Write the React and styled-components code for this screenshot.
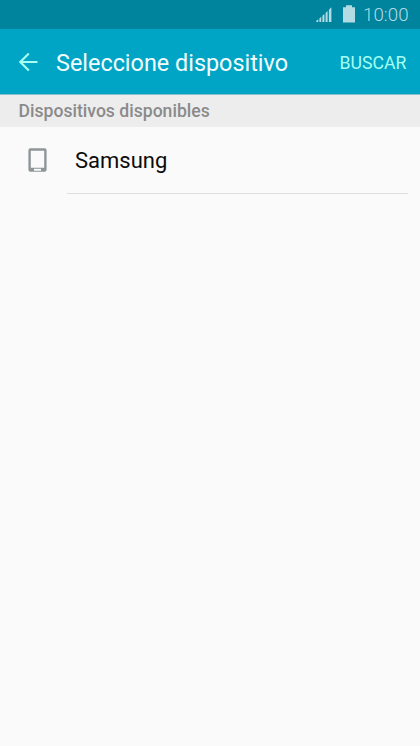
import React from 'react'
import styled, { createGlobalStyle } from 'styled-components'

const devices = [{ id: 1, name: 'Samsung' }]

const App = () => {
	return (
		<>
			<GlobalStyle />
			<Screen>
				<StatusBar>
					<SignalIcon />
					<BatteryIcon />
					<Clock>10:00</Clock>
				</StatusBar>
				<AppBar>
					<BackButton aria-label='Atrás'>
						<BackIcon />
					</BackButton>
					<Title>Seleccione dispositivo</Title>
					<SearchButton>BUSCAR</SearchButton>
				</AppBar>
				<SectionTitle>Dispositivos disponibles</SectionTitle>
				<DeviceList>
					{devices.map(device => (
						<Device key={device.id}>
							<DeviceIcon />
							<DeviceName>{device.name}</DeviceName>
						</Device>
					))}
				</DeviceList>
			</Screen>
		</>
	)
}

const SignalIcon = () => (
	<svg width='16' height='16' viewBox='0 0 16 16' fill='#b3dbe4'>
		<path d='M0.3 15v-1.2l2-1.6V15zM3.4 15v-3.6l1.8-1.6V15zM6.4 15V8.8l2-1.8V15zM9.6 15V6l2-2V15zM12.9 15V2.8l2.5-2.5V15z' />
	</svg>
)

const BatteryIcon = () => (
	<svg width='12' height='18' viewBox='0 0 12 18' fill='#b3dbe4'>
		<path d='M3 0.3h6v2h3V17.6H0V2.3h3z' />
	</svg>
)

const BackIcon = () => (
	<svg width='20' height='20' viewBox='0 0 20 20' fill='none' stroke='#a5fff2' strokeWidth='2.2'>
		<path d='M19.5 10H2.3M10.8 1.4L2.3 10l8.5 8.6' />
	</svg>
)

const DeviceIcon = () => (
	<svg width='20' height='24' viewBox='0 0 20 24'>
		<path
			fill='#8f9699'
			fillRule='evenodd'
			d='M2.4 0.2h14.2A2 2 0 0 1 18.6 2.2v19.5a2 2 0 0 1-2 2h-14.2a2 2 0 0 1-2-2V2.2a2 2 0 0 1 2-2zM2.8 2.8v17h13.4v-17zM6 20.8v1.9h7v-1.9z'
		/>
	</svg>
)

const GlobalStyle = createGlobalStyle`
	* {
		box-sizing: border-box;
	}

	body {
		margin: 0;
		background-color: #fafafa;
		font-family: Roboto, sans-serif;
	}
`

const Screen = styled.div`
	display: flex;
	flex-direction: column;
	width: 100%;
	min-height: 100vh;
	background-color: #fafafa;
`

const StatusBar = styled.div`
	display: flex;
	align-items: center;
	justify-content: flex-end;
	height: 29px;
	padding-right: 11.5px;
	background-color: #00839d;

	& svg:nth-child(2) {
		margin: 0 8px 1px 11px;
	}
`

const Clock = styled.span`
	margin-top: 2px;
	color: #b3dbe4;
	font-size: 18.7px;
	font-weight: 300;
	line-height: 29px;
`

const AppBar = styled.header`
	display: flex;
	align-items: center;
	height: 66px;
	padding: 0 13.5px 0 18px;
	background-color: #00a5c5;
	border-bottom: 1px solid #85c0cd;
`

const BackButton = styled.button`
	display: flex;
	width: 20px;
	padding: 0;
	border: none;
	background: none;
`

const Title = styled.h1`
	flex: 1;
	margin: 3px 0 0 18px;
	color: #f3fcfd;
	font-size: 23.4px;
	font-weight: 400;
	line-height: 28px;
	white-space: nowrap;
`

const SearchButton = styled.button`
	margin-top: 2px;
	padding: 0;
	border: none;
	background: none;
	color: #a5fff2;
	font-family: inherit;
	font-size: 17.7px;
	line-height: 22px;
`

const SectionTitle = styled.h2`
	height: 32px;
	margin: 0;
	padding-left: 18.5px;
	background-color: #ededed;
	color: #8a8a8a;
	font-size: 17.6px;
	font-weight: 500;
	line-height: 33px;
`

const DeviceList = styled.ul`
	margin: 0;
	padding: 0;
	list-style: none;
`

const Device = styled.li`
	display: flex;
	align-items: center;
	height: 67px;
	padding: 0 12px 0 28px;

	& svg {
		margin-bottom: 1px;
	}
`

const DeviceName = styled.span`
	flex: 1;
	height: 67px;
	margin-left: 19px;
	padding-left: 8px;
	border-bottom: 1px solid #dedede;
	color: #0c0c0c;
	font-size: 22px;
	line-height: 68px;
`

export default App
